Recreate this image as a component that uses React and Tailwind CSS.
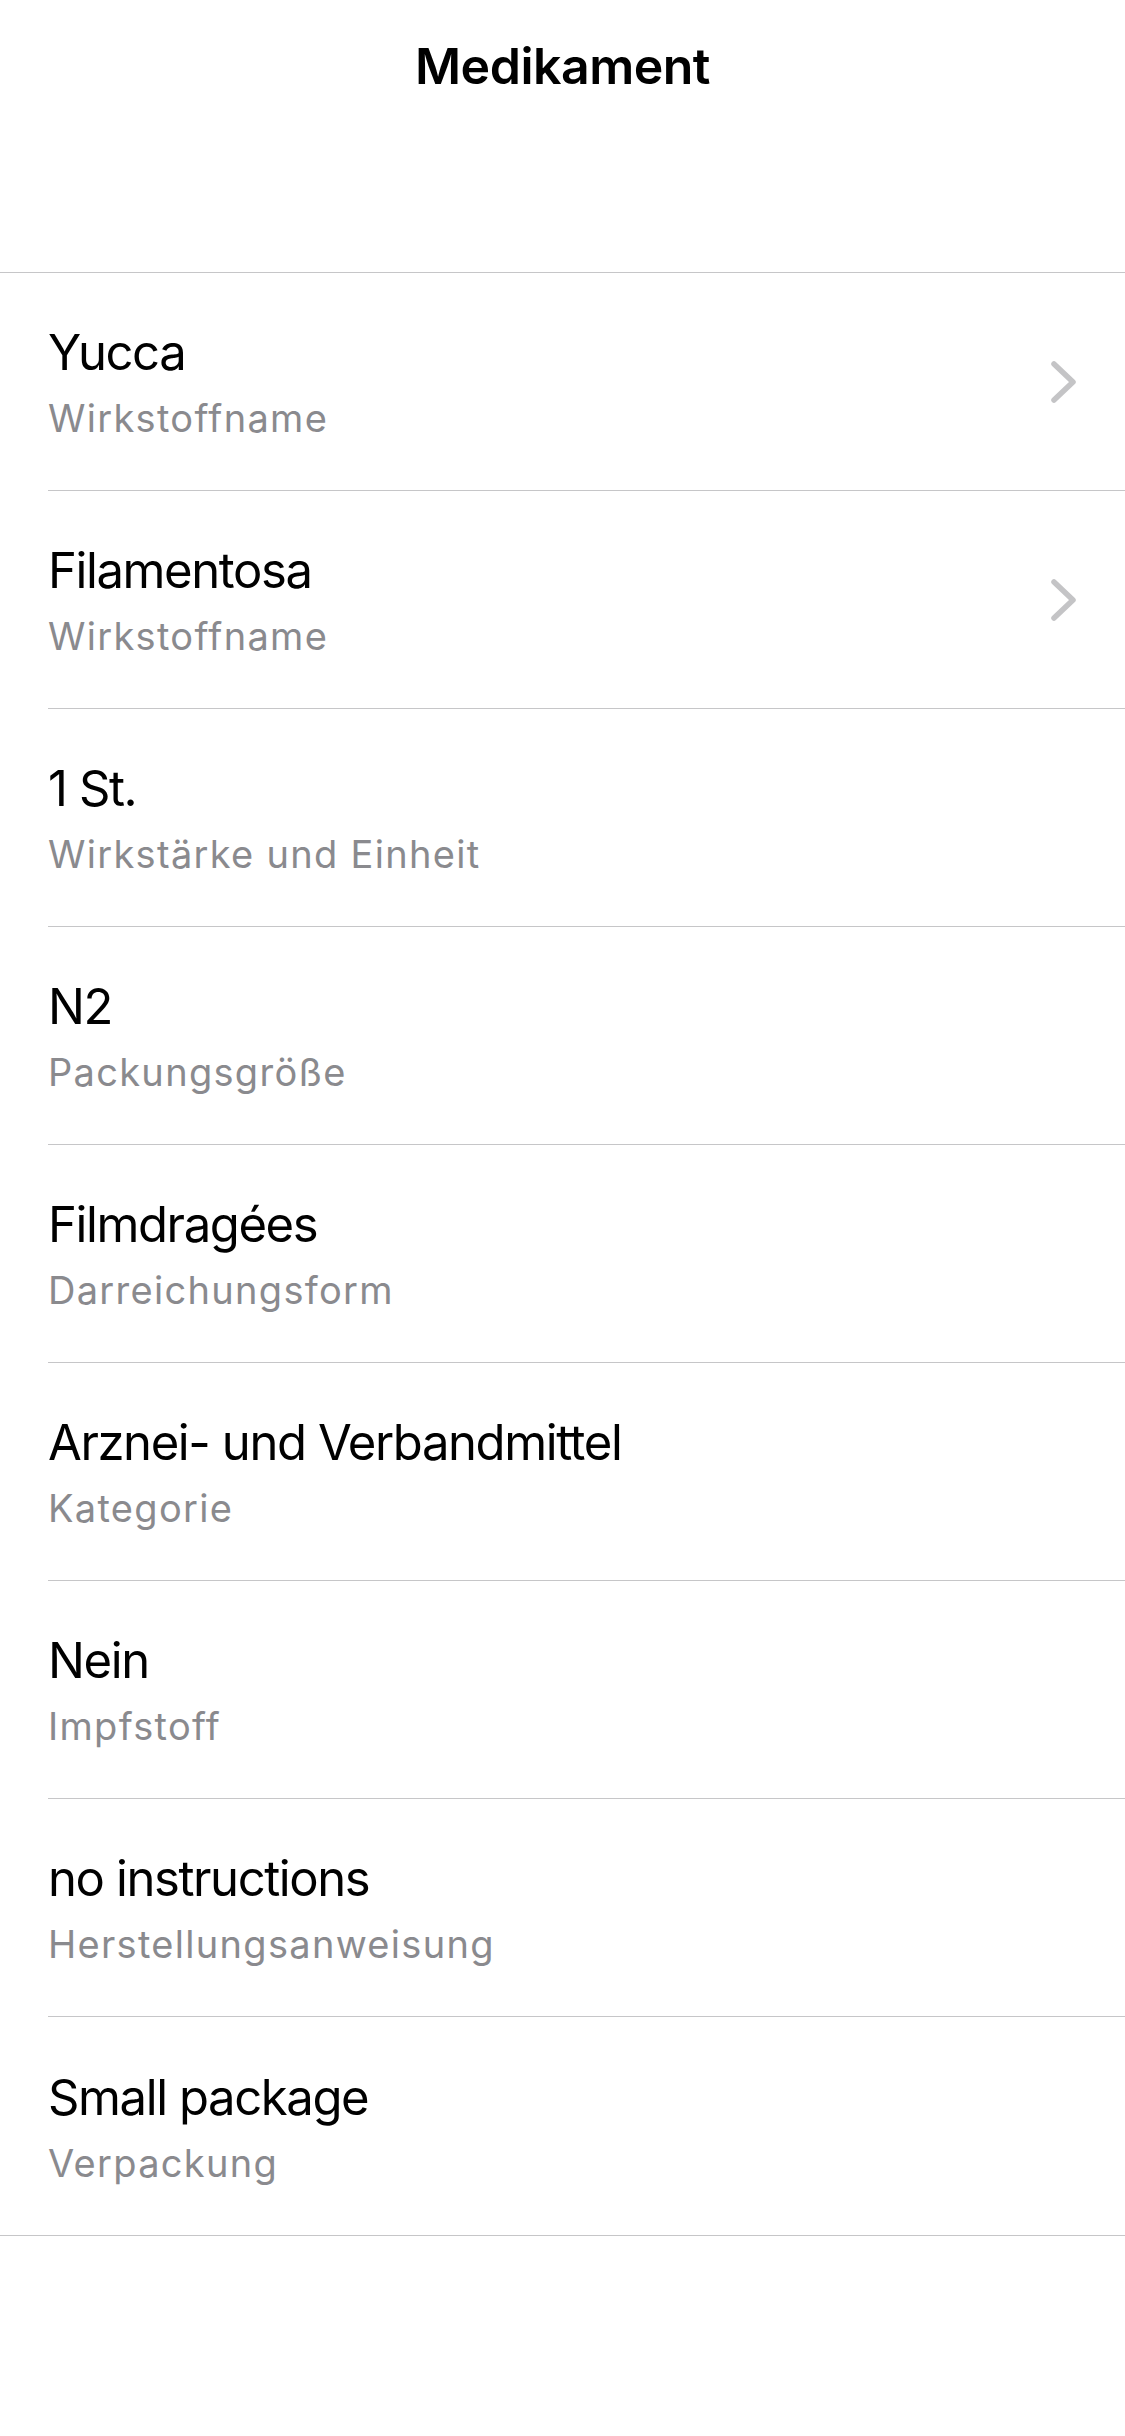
import React from 'react';

const rows = [
    { value: 'Yucca', label: 'Wirkstoffname', link: true },
    { value: 'Filamentosa', label: 'Wirkstoffname', link: true },
    { value: '1 St.', label: 'Wirkstärke und Einheit' },
    { value: 'N2', label: 'Packungsgröße' },
    { value: 'Filmdragées', label: 'Darreichungsform' },
    { value: 'Arznei- und Verbandmittel', label: 'Kategorie' },
    { value: 'Nein', label: 'Impfstoff' },
    { value: 'no instructions', label: 'Herstellungsanweisung' },
    { value: 'Small package', label: 'Verpackung' },
];

const Chevron = () => (
    <svg width="30" height="48" viewBox="0 0 30 48" fill="none" className="shrink-0">
        <path d="M5 6 L24 24 L5 42" stroke="#c4c4c6" strokeWidth="5.5" strokeLinecap="round" strokeLinejoin="round" />
    </svg>
);

const App = () => {
    return (
        <div className="min-h-[2436px] w-[1125px] bg-white text-black" style={{ fontFamily: 'Inter, "Noto Sans", sans-serif' }}>
            {/* Nav bar */}
            <div className="h-[273px] border-b border-[#c6c6c8] pt-[36px] text-center">
                <h1 className="text-[50px] leading-[60px] font-semibold tracking-[-0.5px]">Medikament</h1>
            </div>

            {/* Detail list */}
            <div className="border-b border-[#c6c6c8]">
                {rows.map((row, i) => (
                    <div key={i} className="pl-[48px]">
                        <div className={`h-[218px] flex items-center pr-[46px] ${i < rows.length - 1 ? 'border-b border-[#c6c6c8]' : ''}`}>
                            <div className="flex-1">
                                <div className="text-[49px] leading-[60px] tracking-[-1.4px]">{row.value}</div>
                                <div className="mt-[13px] text-[38px] leading-[44px] text-[#8a8a8e] tracking-[1.3px]">{row.label}</div>
                            </div>
                            {row.link && <Chevron />}
                        </div>
                    </div>
                ))}
            </div>
        </div>
    );
};

export default App;
